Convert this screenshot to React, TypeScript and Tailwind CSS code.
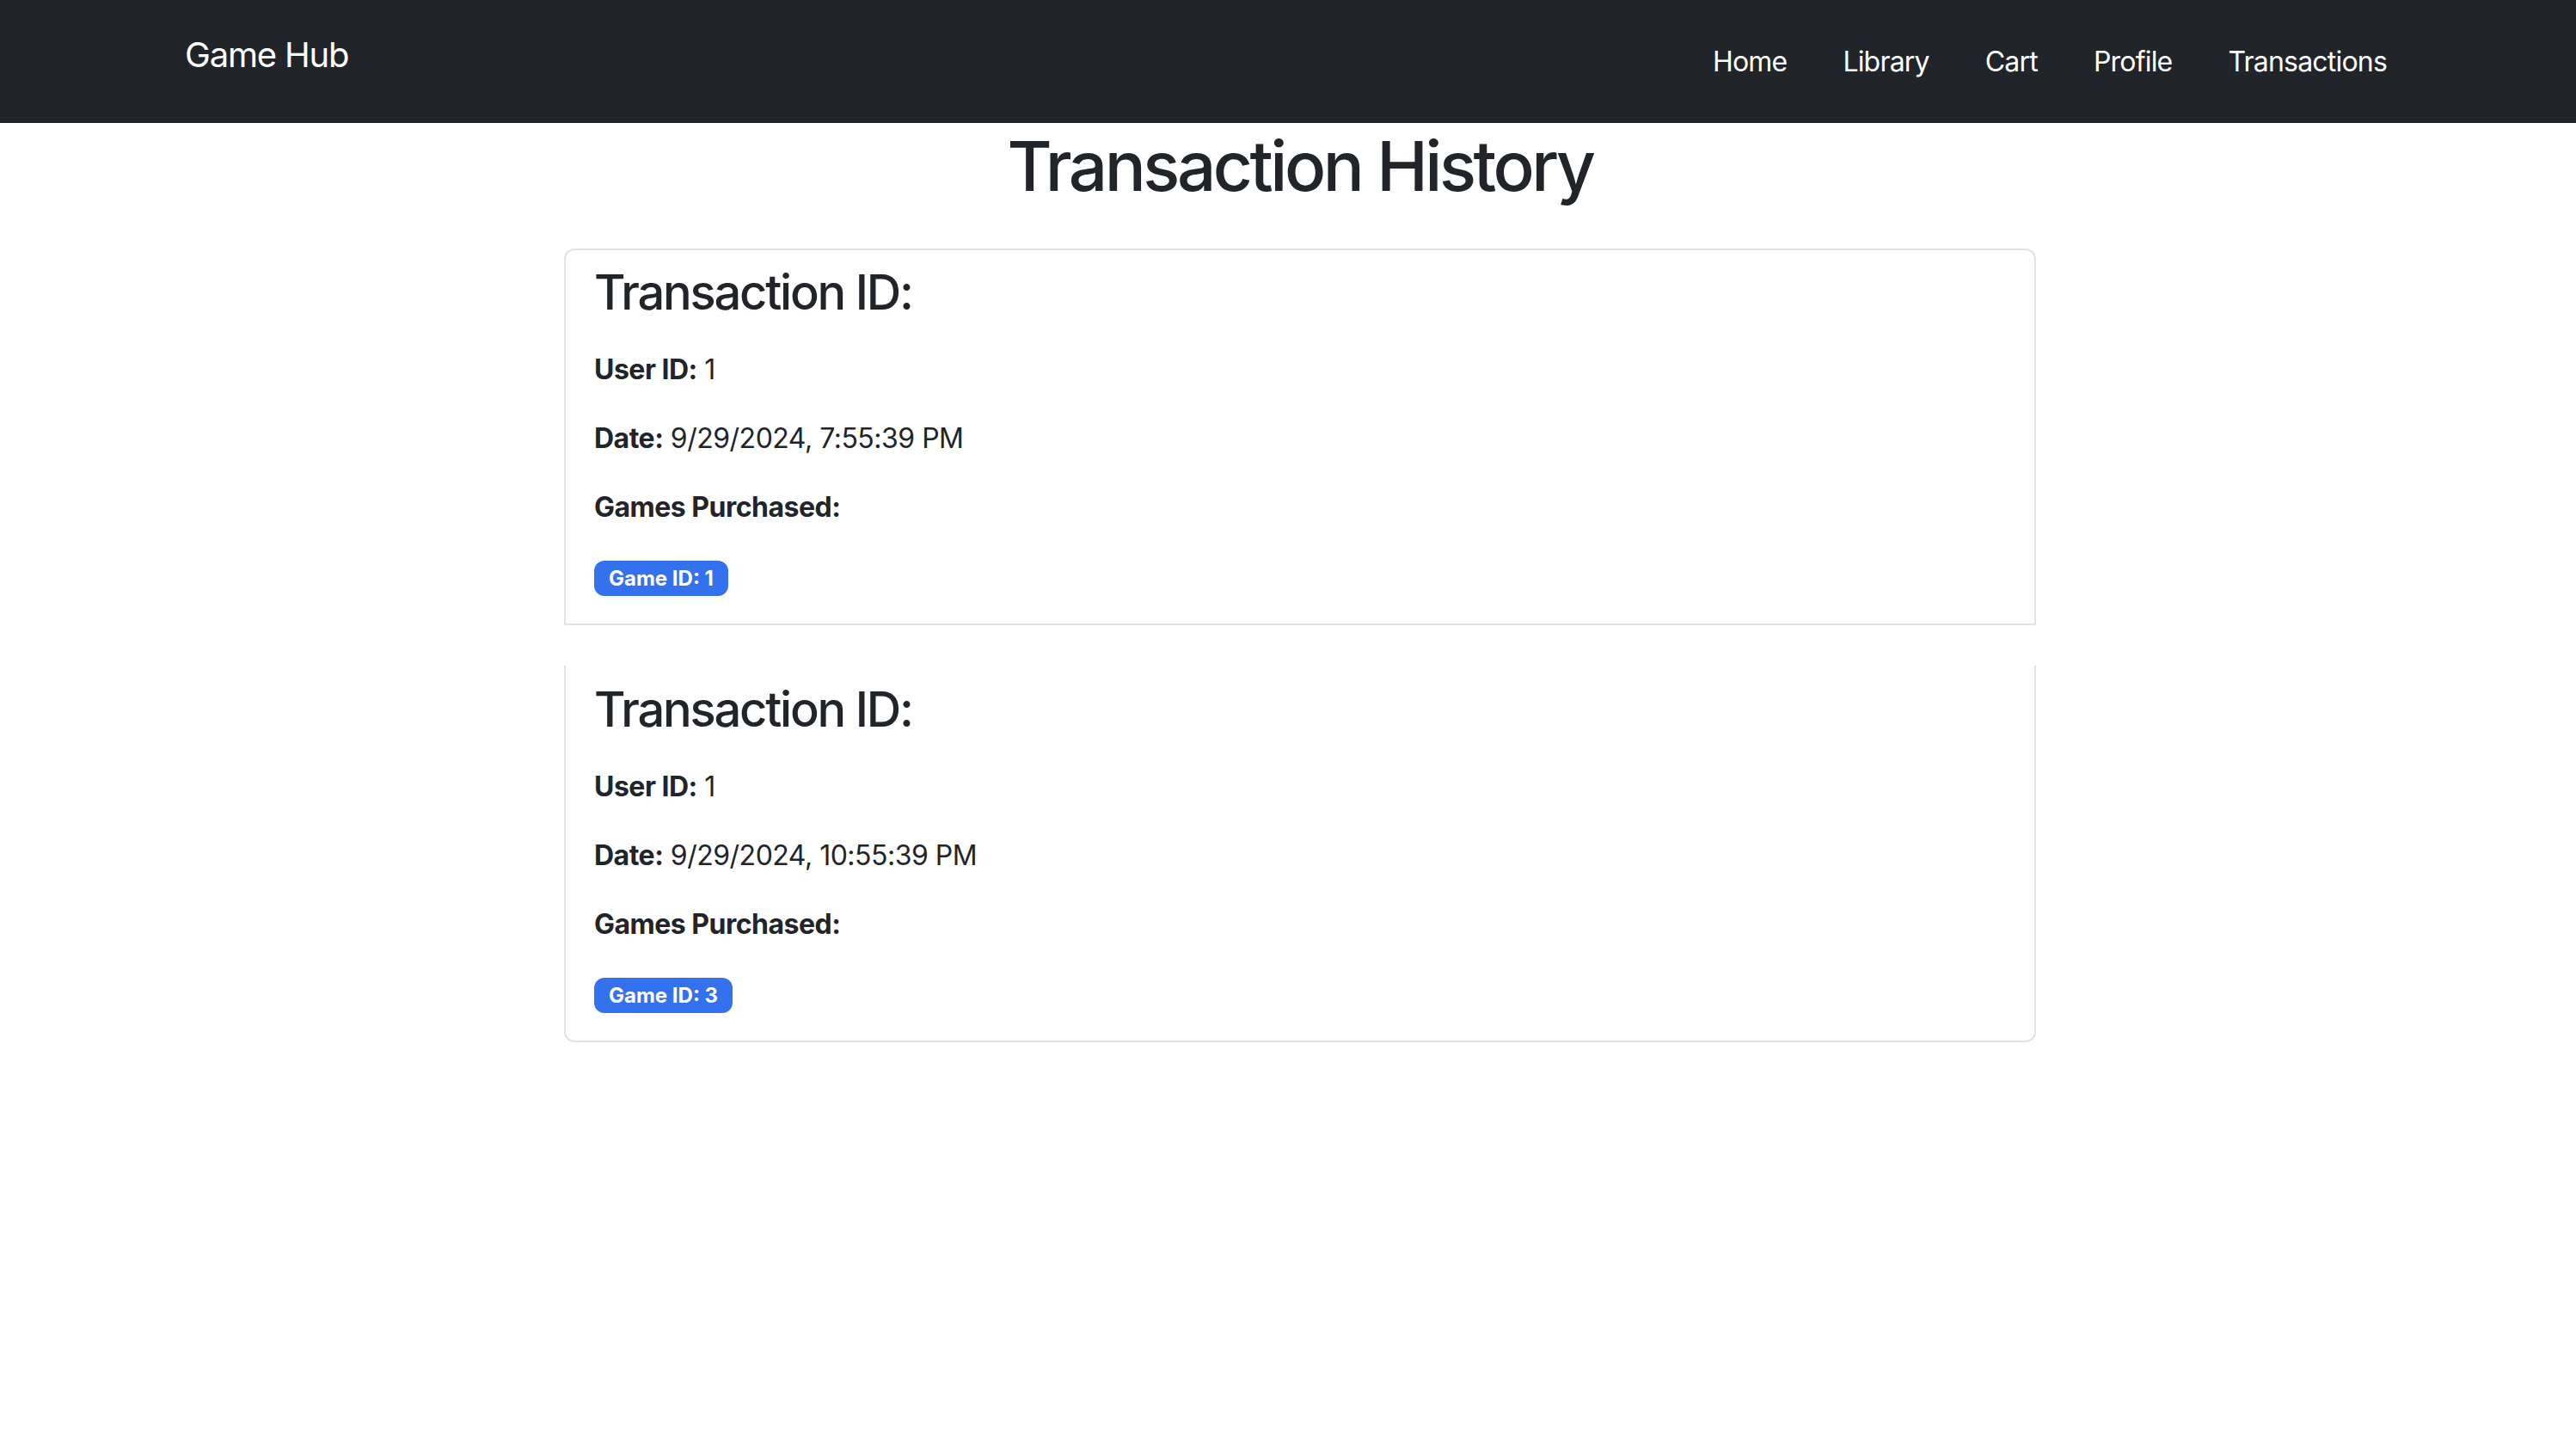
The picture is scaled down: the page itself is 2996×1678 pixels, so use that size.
import React from 'react';

const transactions = [
  { userId: 1, date: '9/29/2024, 7:55:39 PM', games: [1] },
  { userId: 1, date: '9/29/2024, 10:55:39 PM', games: [3] },
];

const links = ['Home', 'Library', 'Cart', 'Profile', 'Transactions'];

const Navbar: React.FC = () => (
  <nav className="flex h-[143px] items-start justify-between bg-[#212529] pl-[215px] pr-[220px]">
    <a className="pt-[34px] text-[40px] leading-[60px] tracking-[-1.2px] text-white">Game Hub</a>
    <ul className="flex gap-[65px] pt-[48px]">
      {links.map((link) => (
        <li key={link} className="text-[32px] leading-[48px] tracking-[-0.8px] text-white">
          {link}
        </li>
      ))}
    </ul>
  </nav>
);

const App: React.FC = () => {
  return (
    <div className="min-h-screen bg-white text-[#212529] font-['Inter','Noto_Sans',sans-serif]">
      <Navbar />
      <main className="pl-[28px]">
        <div className="mx-auto w-[1712px]">
          <h1 className="mb-[48px] mt-[2px] text-center text-[80px] font-medium leading-[96px] tracking-[-3.5px]">
            Transaction History
          </h1>
          {transactions.map((t, index) => (
            <div
              key={index}
              className={
                index === 0
                  ? 'mb-[47px] rounded-t-[12px] border-2 border-[#e2e3e5] px-[33px] pb-[32px] pt-[16px]'
                  : 'mb-[47px] rounded-b-[12px] border-2 border-t-0 border-[#e2e3e5] px-[33px] pb-[32px] pt-[18px]'
              }
            >
              <h3 className="mb-[32px] text-[56px] font-medium leading-[67px] tracking-[-2.2px]">
                Transaction ID:
              </h3>
              <p className="mb-[32px] text-[32px] leading-[48px] tracking-[-0.5px]">
                <strong className="font-bold">User ID:</strong> {t.userId}
              </p>
              <p className="mb-[32px] text-[32px] leading-[48px] tracking-[-0.5px]">
                <strong className="font-bold">Date:</strong> {t.date}
              </p>
              <p className="mb-[32px] text-[32px] font-bold leading-[48px] tracking-[-0.5px]">
                Games Purchased:
              </p>
              <div className="flex gap-[16px] pt-[6px]">
                {t.games.map((g) => (
                  <span
                    key={g}
                    className="inline-flex h-[41px] items-center rounded-[12px] bg-[#3471ee] px-[17px] text-[24px] font-bold leading-none text-white"
                  >
                    Game ID: {g}
                  </span>
                ))}
              </div>
            </div>
          ))}
        </div>
      </main>
    </div>
  );
};

export default App;
